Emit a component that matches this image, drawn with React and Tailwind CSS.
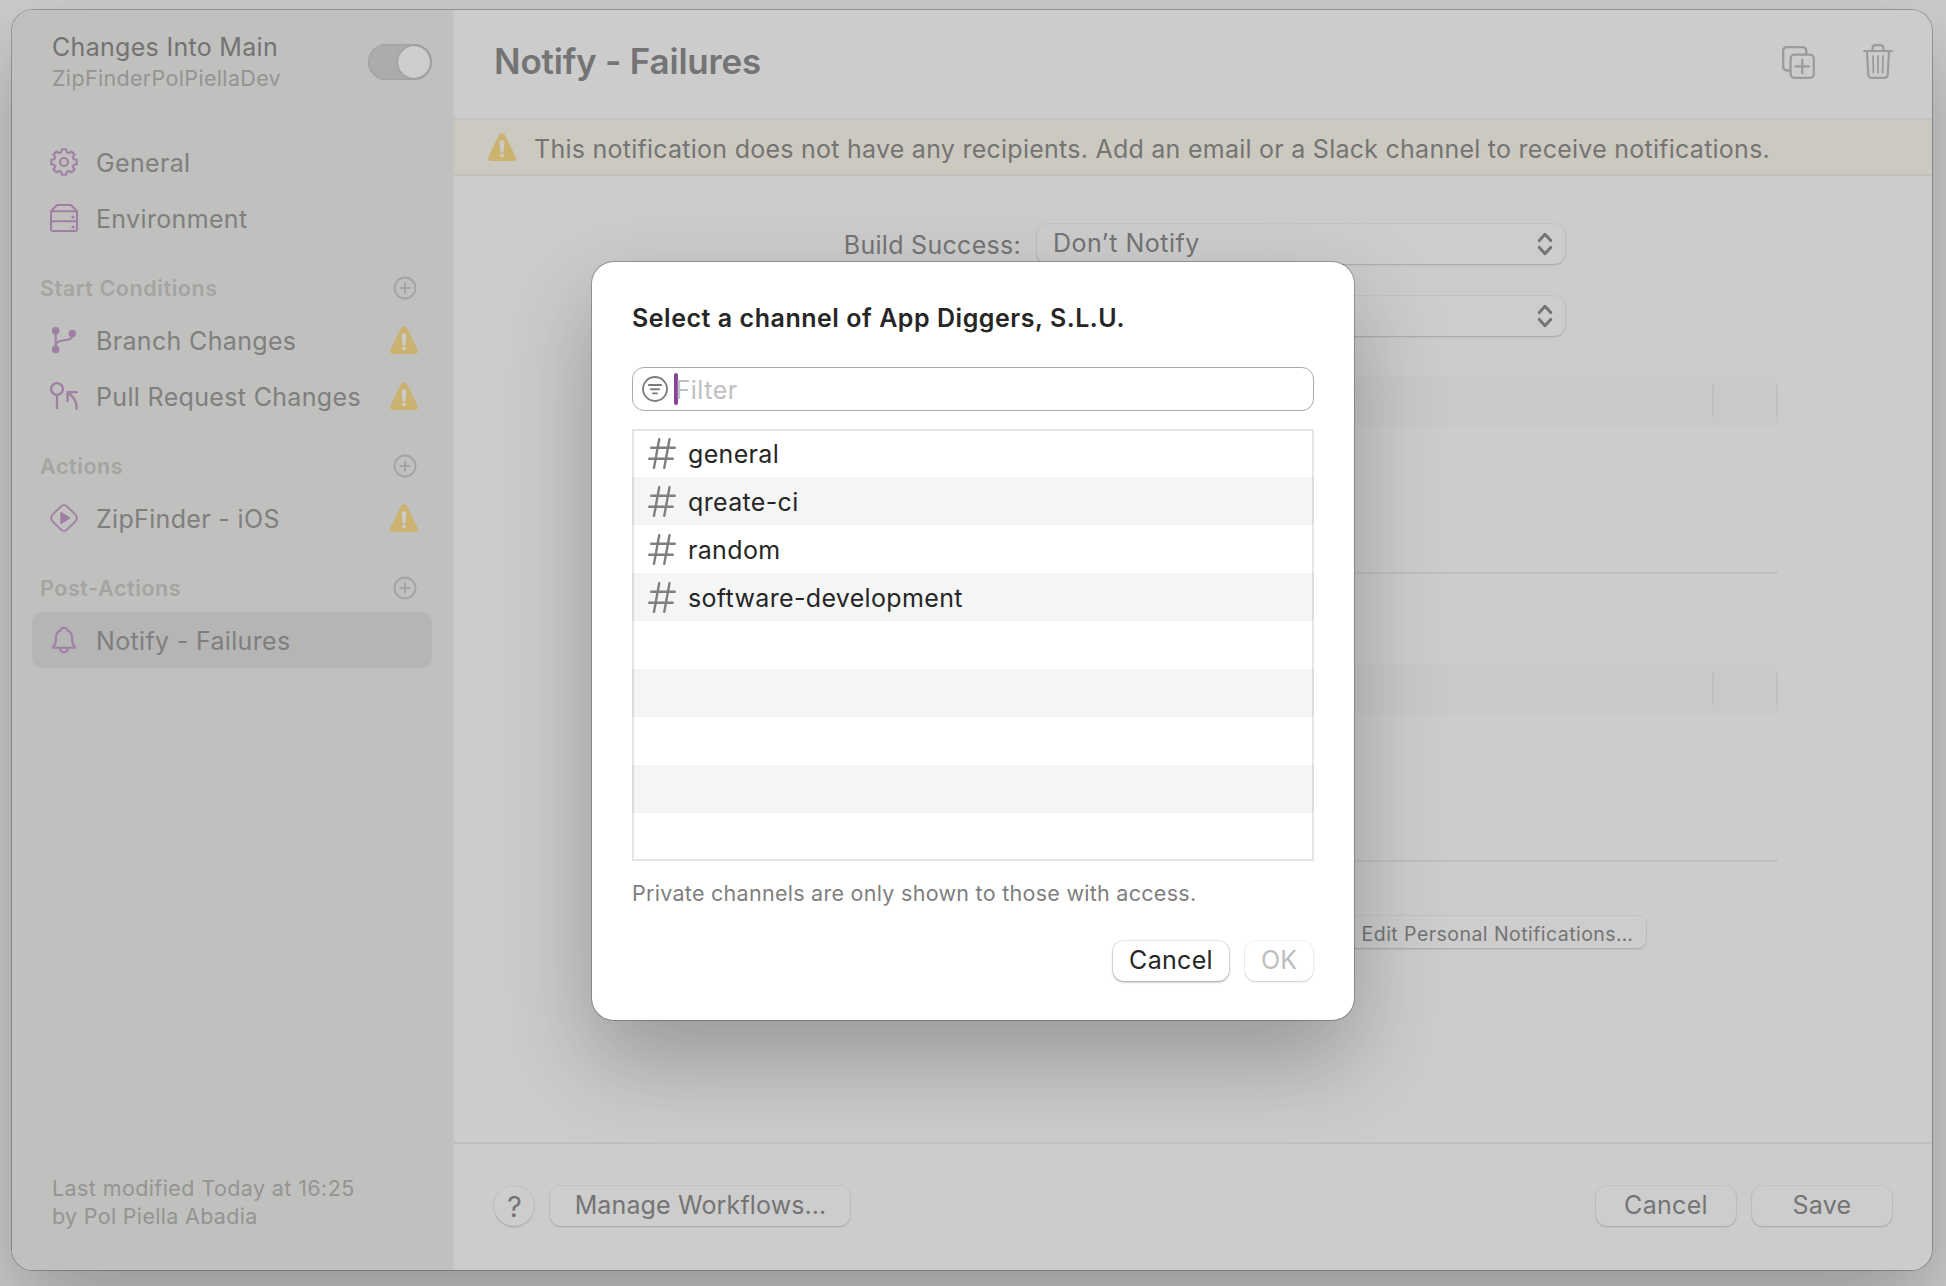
const purple = "#a07fa5";

function GearIcon() {
  const teeth = 8;
  const pts = [];
  for (let i = 0; i < teeth; i++) {
    const base = (i * 2 * Math.PI) / teeth - Math.PI / 2;
    for (const [da, r] of [[-0.27, 10.2], [-0.17, 12.9], [0.17, 12.9], [0.27, 10.2]]) {
      pts.push(`${(14 + r * Math.cos(base + da)).toFixed(2)} ${(14 + r * Math.sin(base + da)).toFixed(2)}`);
    }
  }
  return (
    <svg width="28" height="28" viewBox="0 0 28 28" fill="none" stroke={purple} strokeWidth="2.1" strokeLinejoin="round">
      <path d={`M${pts.join("L")}Z`} />
      <circle cx="14" cy="14" r="4" />
    </svg>
  );
}

function ServerIcon() {
  return (
    <svg width="28" height="28" viewBox="0 0 28 28" fill="none" stroke={purple} strokeWidth="2.1" strokeLinejoin="round">
      <path d="M1 7.2 6.2 1.8Q7 1 8.2 1h11.6Q21 1 21.8 1.8L27 7.2V25q0 2-2 2H3q-2 0-2-2Z" />
      <path d="M1 7.2h26M1 17.2h26" />
      <circle cx="23" cy="13" r="1.6" fill={purple} stroke="none" />
      <circle cx="23" cy="23" r="1.6" fill={purple} stroke="none" />
    </svg>
  );
}

function BranchIcon() {
  return (
    <svg width="28" height="28" viewBox="0 0 28 28" fill="none" stroke={purple} strokeWidth="2.1" strokeLinecap="round">
      <path d="M5.7 5v18M22.3 8c0 5-3 5.800-8 6.200-4 .3-8.600 1-8.600 6" />
      <circle cx="5.700" cy="4.800" r="3.800" fill={purple} stroke="none" />
      <circle cx="22.300" cy="7.600" r="3.800" fill={purple} stroke="none" />
      <circle cx="5.700" cy="23.400" r="3.800" fill={purple} stroke="none" />
    </svg>
  );
}

function PullIcon() {
  return (
    <svg width="28" height="28" viewBox="0 0 28 28" fill="none" stroke={purple} strokeWidth="2.3" strokeLinecap="round" strokeLinejoin="round">
      <circle cx="7" cy="7" r="5.900" />
      <path d="M7 13.500v12.800M17.500 19.300V10.200H27M17.800 10.500c6 4.500 9 8.500 8.700 16.300" />
    </svg>
  );
}

function PlayDiamondIcon() {
  return (
    <svg width="28" height="28" viewBox="0 0 28 28" fill="none" stroke={purple} strokeWidth="1.9" strokeLinejoin="round">
      <rect x="3.600" y="3.600" width="20.800" height="20.800" rx="4.700" transform="rotate(45 14 14)" />
      <path d="M11 8.600v10.800L19.600 14Z" fill={purple} strokeWidth="1.300" />
    </svg>
  );
}

function BellIcon() {
  return (
    <svg width="28" height="28" viewBox="0 0 28 28" fill="none" stroke={purple} strokeWidth="2.1" strokeLinejoin="round" strokeLinecap="round">
      <path d="M3.200 21.800h21.600c.6-.6 0-1.400-.6-2.100-1.700-1.800-2.200-3.200-2.200-7.700 0-3.600-1.600-6.600-4.700-7.700C16.800 2.700 15.700 1.700 14 1.700s-2.800 1-3.300 2.600C7.600 5.400 6 8.400 6 12c0 4.500-.5 5.900-2.200 7.700-.6.700-1.200 1.500-.6 2.100Z" />
      <path d="M10 22.300c.3 2.400 1.900 3.900 4 3.900s3.700-1.500 4-3.900" />
    </svg>
  );
}

function WarningIcon() {
  return (
    <svg width="28" height="28" viewBox="0 0 28 28">
      <path d="M11.500 1.600Q14-1.300 16.500 1.600 17.200 2.600 27.400 23.400 29 27.500 25 28H3Q-1 27.500.6 23.400 10.800 2.600 11.500 1.600Z" fill="#cbb26f" />
      <path d="M14 7.300c1.700 0 2.600 1 2.500 2.400l-.9 8.200c-.1 1-.7 1.500-1.600 1.500s-1.500-.5-1.600-1.500l-.9-8.200c-.1-1.400.8-2.400 2.500-2.400Z" fill="#cdcbc6" />
      <circle cx="14" cy="22.600" r="2" fill="#cdcbc6" />
    </svg>
  );
}

function PlusCircle() {
  return (
    <svg width="24" height="24" viewBox="0 0 24 24" fill="none" stroke="#a3a3a2" strokeLinecap="round">
      <circle cx="12" cy="12" r="10.500" strokeWidth="1.900" />
      <path d="M12 7.300v9.400M7.300 12h9.400" strokeWidth="1.900" />
    </svg>
  );
}

function DuplicateIcon() {
  return (
    <svg width="33" height="33" viewBox="0 0 33 33" fill="none" stroke="#9b9b9b" strokeWidth="2.300" strokeLinecap="round">
      <path d="M7.700 24.500H5q-3.800 0-3.800-3.900V5Q1.200 1.200 5 1.200h15.400q3.900 0 3.900 3.800v2.700" />
      <rect x="8.600" y="8.700" width="23.200" height="23.100" rx="3.900" />
      <path d="M20.200 13.800v13.200M13.600 20.400h13.200" />
    </svg>
  );
}

function TrashIcon() {
  return (
    <svg width="30" height="35" viewBox="0 0 30 35" fill="none" stroke="#9b9b9b" strokeWidth="2.200" strokeLinecap="round" strokeLinejoin="round">
      <path d="M1.200 7h27.600M9.600 7V4q0-2.900 3-2.900h4.800q3 0 3 2.900v3M4 7.500l1.300 23.300q.2 3 3.200 3h13q3 0 3.200-3L26 7.500" />
      <path d="M10 12l.4 16.800M15 12v16.800M20 12l-.4 16.800" strokeWidth="1.800" />
    </svg>
  );
}

function Chevrons() {
  return (
    <svg width="16" height="24" viewBox="0 0 16 24" fill="none" stroke="#747474" strokeWidth="3" strokeLinecap="round" strokeLinejoin="round">
      <path d="M2.300 8.600 8 2.300l5.700 6.300M2.300 15.400 8 21.700l5.700-6.300" />
    </svg>
  );
}

function FilterIcon() {
  return (
    <svg width="26" height="26" viewBox="0 0 26 26" fill="none" stroke="#7c7c7c" strokeWidth="1.800" strokeLinecap="round">
      <circle cx="13" cy="13" r="12" />
      <path d="M6.800 9h12.400M8.900 13.200h8.200M11 17.400h4" strokeWidth="1.900" />
    </svg>
  );
}

function HashIcon() {
  return (
    <svg width="28" height="31" viewBox="0 0 28 31" fill="none" stroke="#7f7f7f" strokeWidth="2.400" strokeLinecap="round">
      <path d="M11.200 1.200 6 29.800M21.500 1.200 16.300 29.800M3.300 9.700h23.500M1.200 20.800h23.500" />
    </svg>
  );
}

function NavRow({ icon, label, warn, selected }) {
  return (
    <div className={`ml-5 flex h-14 w-[400px] shrink-0 items-center rounded-[10px] pl-[18px] pr-[14px] ${selected ? "bg-[#b5b5b5]" : ""}`}>
      {icon}
      <span className="ml-[18px] flex-1 pt-[2px] text-[25px] leading-8 tracking-[0.0135em] text-[#7f7f7e]">{label}</span>
      {warn && <WarningIcon />}
    </div>
  );
}

function Section({ title }) {
  return (
    <div className="mt-[18px] flex h-12 items-center justify-between pl-7 pr-[35.500px]">
      <span className="text-[21.500px] font-semibold leading-7 tracking-[0.027em] text-[#a4a4a2]">{title}</span>
      <PlusCircle />
    </div>
  );
}

const dimButton =
  "flex items-center justify-center bg-[#cdcdcd] text-[#747474] shadow-[0_0_0_1px_rgba(0,0,0,0.03),0_1px_2px_rgba(0,0,0,0.17)]";

function SelectRow({ label, value }) {
  return (
    <div className="flex h-10">
      <div className="w-[567px] pt-[5px] text-right text-[25px] leading-8 tracking-[0.0116em] text-[#747474]">{label}</div>
      <div className="ml-4 flex h-10 w-[528px] items-center justify-between rounded-[11px] bg-[#cdcdcd] pl-4 pr-3 shadow-[0_0_0_1px_rgba(0,0,0,0.03),0_1px_2px_rgba(0,0,0,0.17)]">
        <span className="-mt-[3px] text-[25px] leading-8 tracking-[0.020em] text-[#747474]">{value}</span>
        <Chevrons />
      </div>
    </div>
  );
}

function TableHeader() {
  return (
    <div className="ml-[138px] flex h-[50px] w-[1186px] items-center justify-end rounded-t-[10px] bg-[#c9c9c9]">
      <div className="h-8 w-[66px] border-x-2 border-[#bfbfbf]" />
    </div>
  );
}

const channels = ["general", "qreate-ci", "random", "software-development", "", "", "", "", ""];

function ChannelDialog() {
  return (
    <div className="absolute left-[592px] top-[262px] flex h-[758px] w-[762px] flex-col rounded-[22px] bg-white px-10 pt-10 shadow-[0_0_0_1px_rgba(0,0,0,0.25),0_40px_90px_rgba(0,0,0,0.26)]">
      <div className="text-[25px] font-semibold leading-8 tracking-[0.0215em] text-[#262626]">
        Select a channel of App Diggers, S.L.U.
      </div>
      <div className="mt-[33px] flex h-11 items-center rounded-[12px] border border-[#ababab] pl-[9px]">
        <FilterIcon />
        <div className="ml-[6px] h-8 w-1 rounded-[2px] bg-[#8b4394]" />
        <span className="-ml-[2.500px] pt-[2px] text-[25px] leading-8 tracking-[0.0197em] text-[#bfbfbf]">Filter</span>
      </div>
      <div className="relative mt-[18px]">
        {channels.map((name, i) => (
          <div key={i} className={`flex h-12 items-center pl-4 ${i % 2 ? "bg-[#f4f5f5]" : "bg-white"}`}>
            {name && <HashIcon />}
            <span className="ml-3 pt-[1px] text-[25px] leading-8 tracking-[0.0135em] text-[#262626]">{name}</span>
          </div>
        ))}
        <div className="absolute inset-0 border-2 border-black/10" />
      </div>
      <div className="mt-[17px] text-[21.500px] leading-[30px] tracking-[0.0128em] text-[#808080]">
        Private channels are only shown to those with access.
      </div>
      <div className="mt-[33px] flex justify-end gap-4">
        <div className="flex h-10 w-[116px] items-center justify-center rounded-[11px] bg-white text-[25px] tracking-[0.012em] text-[#262626] shadow-[0_0_0_1px_rgba(0,0,0,0.07),0_1px_2.500px_rgba(0,0,0,0.36)]">
          Cancel
        </div>
        <div className="mr-[1px] flex h-10 w-[68px] items-center justify-center rounded-[11px] bg-white text-[25px] text-[#bdbdbd] shadow-[0_0_0_1px_rgba(0,0,0,0.04),0_1px_2px_rgba(0,0,0,0.16)]">
          OK
        </div>
      </div>
    </div>
  );
}

export default function App() {
  return (
    <div className="relative h-[1286px] w-[1946px] overflow-hidden bg-[#cccccc] px-3 pt-[10px] font-['Inter',sans-serif]">
      <div className="h-[1260px] w-[1920px] rounded-[21px] shadow-[0_0_0_1px_rgba(0,0,0,0.25),0_40px_90px_rgba(0,0,0,0.26)]">
        <div className="flex h-full overflow-hidden rounded-[21px] bg-[#cccccc]">
          <aside className="flex w-[442px] shrink-0 flex-col border-r-2 border-[#c2c2c1] bg-[#c0c0be]">
            <div className="flex h-[124px] shrink-0 justify-between pl-10 pr-5 pt-[21px]">
              <div>
                <div className="text-[25px] leading-8 tracking-[0.012em] text-[#737373]">Changes Into Main</div>
                <div className="text-[21.500px] leading-[30px] tracking-[0.0155em] text-[#949493]">ZipFinderPolPiellaDev</div>
              </div>
              <div className="mt-[13px] flex h-9 w-16 items-center justify-end rounded-full bg-[#acacac] pr-[2px] shadow-[inset_0_0_2px_rgba(0,0,0,0.2)]">
                <div className="size-8 rounded-full bg-[#cdcdcd] shadow-[0_0_2px_rgba(0,0,0,0.3)]" />
              </div>
            </div>
            <NavRow icon={<GearIcon />} label="General" />
            <NavRow icon={<ServerIcon />} label="Environment" />
            <Section title="Start Conditions" />
            <NavRow icon={<BranchIcon />} label="Branch Changes" warn />
            <NavRow icon={<PullIcon />} label="Pull Request Changes" warn />
            <Section title="Actions" />
            <NavRow icon={<PlayDiamondIcon />} label="ZipFinder - iOS" warn />
            <Section title="Post-Actions" />
            <NavRow icon={<BellIcon />} label="Notify - Failures" selected />
            <div className="mt-auto pb-10 pl-10 text-[21.500px] leading-7 text-[#949493]">
              <div className="tracking-[0.0187em]">Last modified Today at 16:25</div>
              <div className="tracking-[0.0145em]">by Pol Piella Abadia</div>
            </div>
          </aside>
          <main className="flex min-w-0 flex-1 flex-col">
            <header className="flex h-[108px] shrink-0 items-start justify-between pl-10 pr-[39px]">
              <h1 className="mt-[31px] text-[35px] font-semibold leading-10 tracking-[-0.0055em] text-[#747474]">Notify - Failures</h1>
              <div className="flex gap-12">
                <div className="mt-9">
                  <DuplicateIcon />
                </div>
                <div className="mt-[34px]">
                  <TrashIcon />
                </div>
              </div>
            </header>
            <div className="flex h-[58px] shrink-0 items-center border-y-2 border-t-[#c2c2c1] border-b-[#c3c0b9] bg-[#ccc9c0] pl-[34px]">
              <WarningIcon />
              <span className="ml-[18px] pt-[3px] text-[25px] leading-8 tracking-[0.0101em] text-[#747473]">
                This notification does not have any recipients. Add an email or a Slack channel to receive notifications.
              </span>
            </div>
            <section className="flex-1 pt-12">
              <SelectRow label="Build Success:" value="Don’t Notify" />
              <div className="mt-8">
                <SelectRow label="" value={<span />} />
              </div>
              <div className="mt-10">
                <TableHeader />
              </div>
              <div className="ml-[138px] mt-[146px] h-[2px] w-[1186px] bg-[#c0c0c0]" />
              <div className="mt-[90px]">
                <TableHeader />
              </div>
              <div className="ml-[138px] mt-[146px] h-[2px] w-[1186px] bg-[#c0c0c0]" />
              <div className="mt-[54px] flex">
                <div className={`${dimButton} ml-[893px] h-8 w-[299px] rounded-[8px] pl-[2px] pt-[3px] text-[19.500px] leading-7 tracking-[0.0232em]`}>
                  Edit Personal Notifications…
                </div>
              </div>
            </section>
            <footer className="flex h-32 shrink-0 items-start border-t-2 border-[#c0c0c0] pl-10 pr-10 pt-[42px] text-[25px]">
              <div className={`${dimButton} size-10 rounded-full pl-[1px] pt-[1px] text-[29px] leading-10`}>?</div>
              <div className={`${dimButton} ml-4 h-10 w-[300px] rounded-[11px] pl-[1px] tracking-[0.0056em]`}>Manage Workflows…</div>
              <div className={`${dimButton} ml-auto h-10 w-[140px] rounded-[11px] tracking-[0.012em]`}>Cancel</div>
              <div className={`${dimButton} ml-4 h-10 w-[140px] rounded-[11px] tracking-[0.010em]`}>Save</div>
            </footer>
          </main>
        </div>
      </div>
      <ChannelDialog />
    </div>
  );
}
